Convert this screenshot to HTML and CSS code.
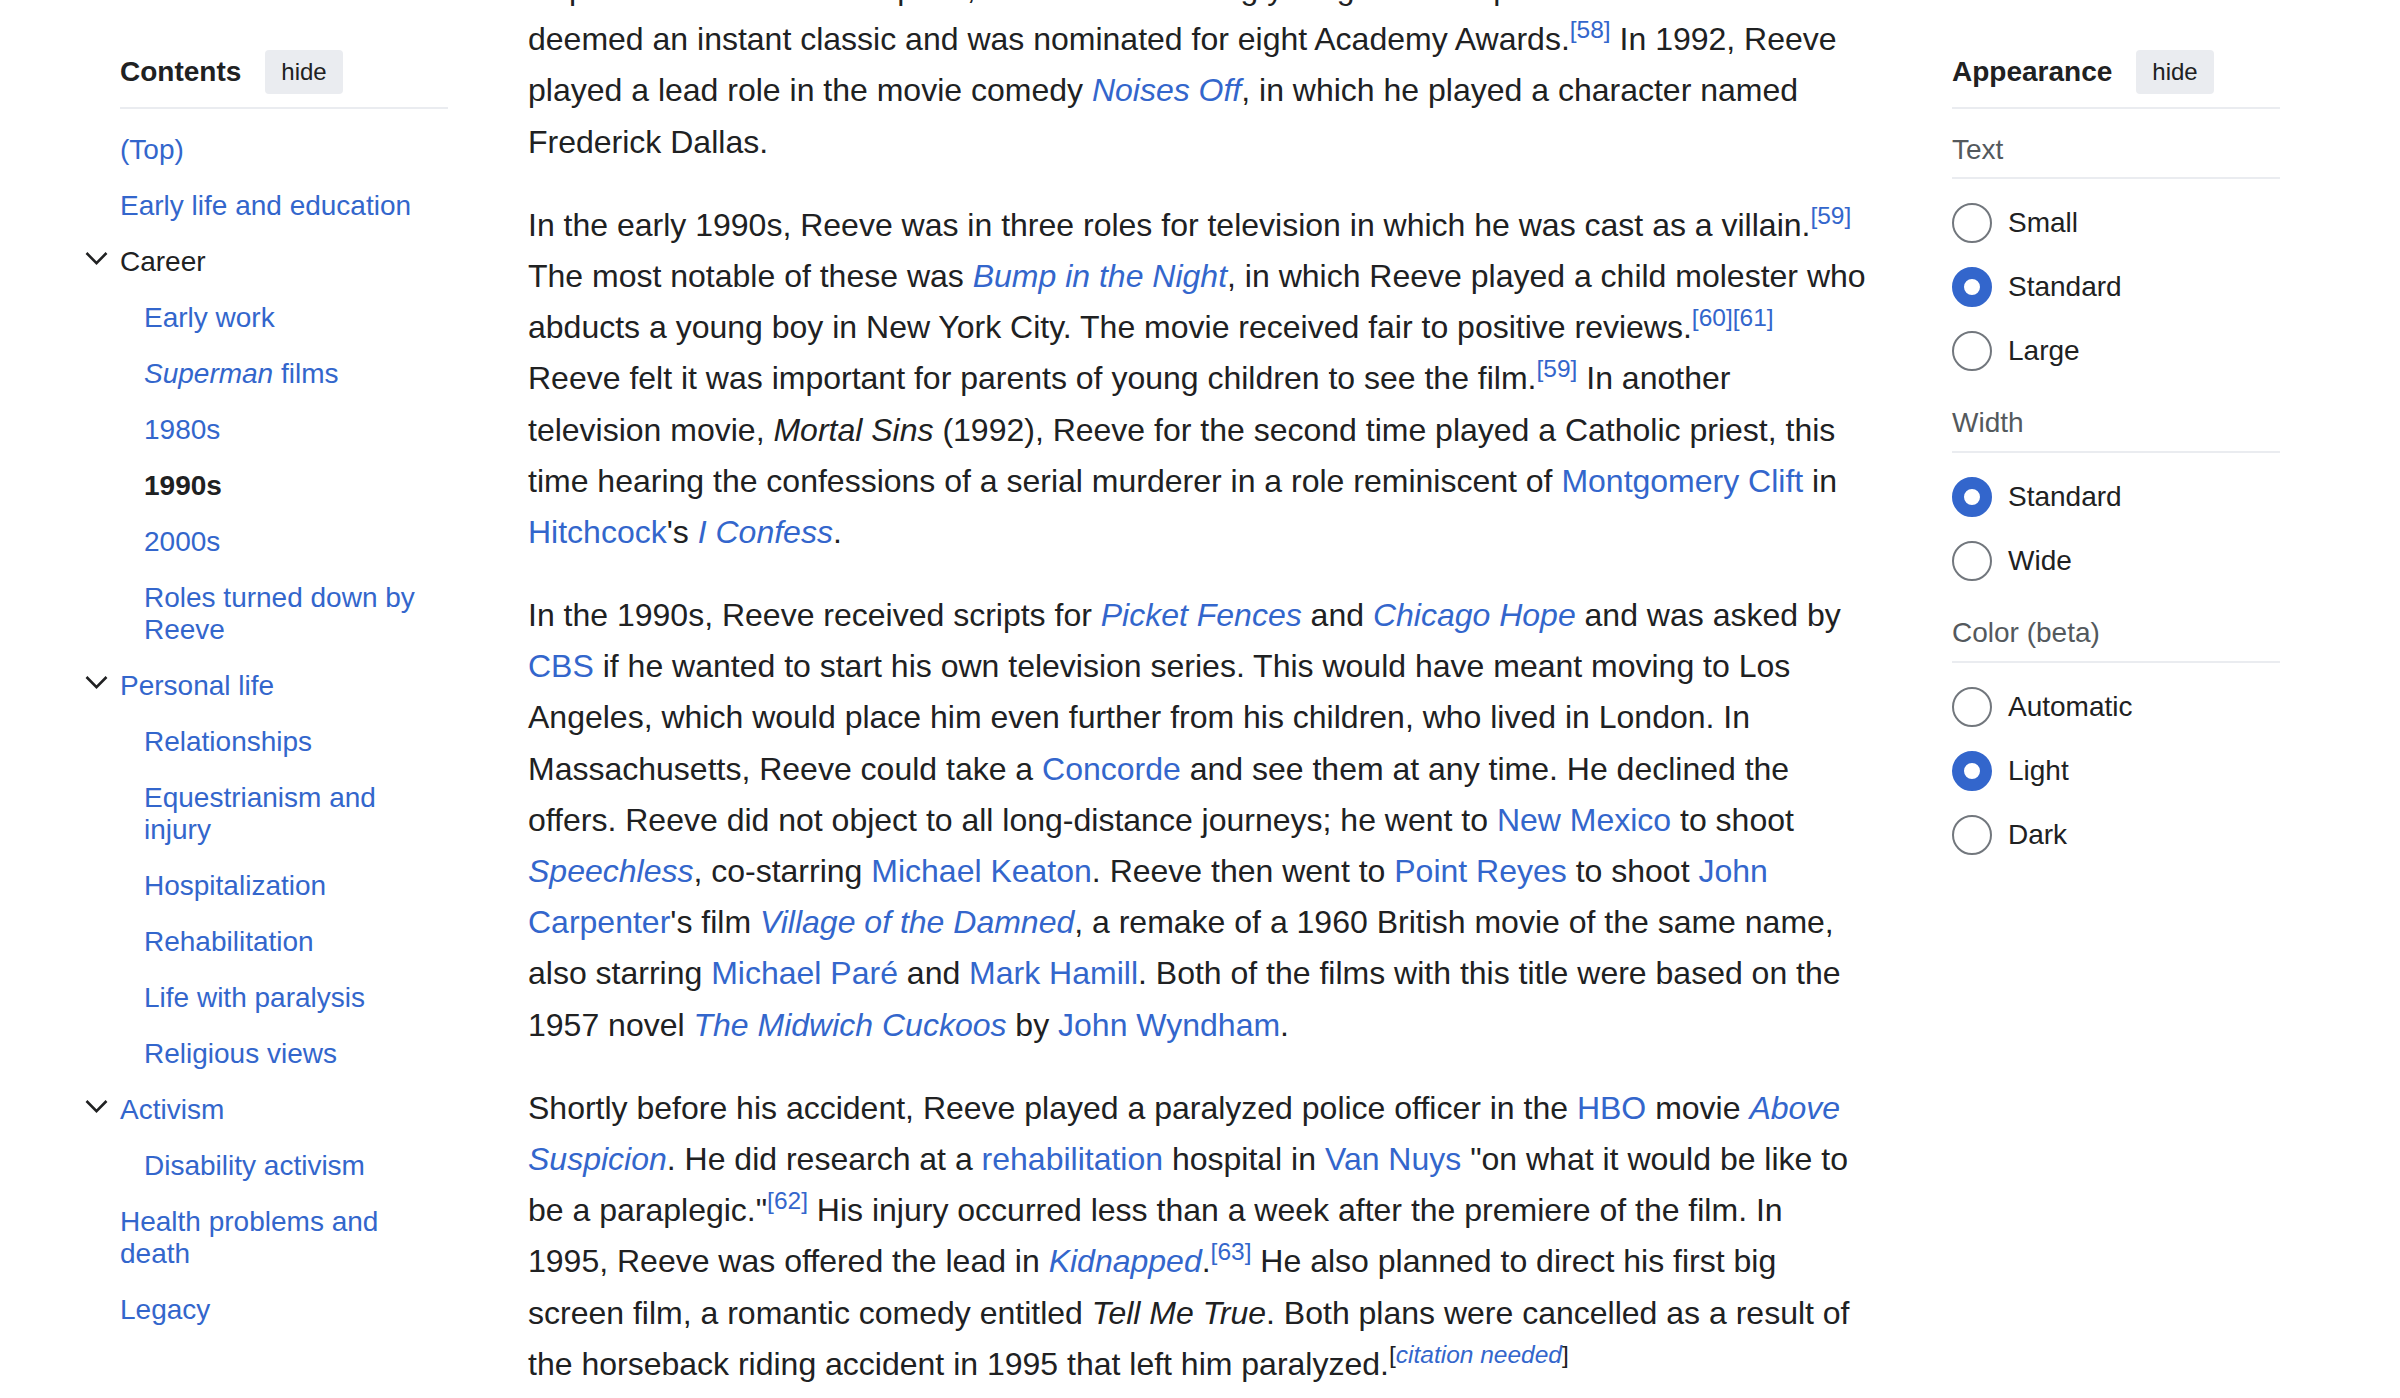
FILE: index.html
```html
<!DOCTYPE html>
<html lang="en">
<head>
<meta charset="utf-8">
<title>Christopher Reeve – 1990s</title>
<link rel="stylesheet" href="styles.css">
</head>
<body>
<div class="page">
  <nav class="toc">
    <div class="panel-header">
      <h2 class="panel-title">Contents</h2>
      <button class="hide-btn" type="button">hide</button>
    </div>
    <ul class="toc-list">
      <li class="toc-item"><a href="#">(Top)</a></li>
      <li class="toc-item"><a href="#">Early life and education</a></li>
      <li class="toc-item">
        <svg class="chevron" viewBox="0 0 23 15" width="23" height="15"><polyline points="1.5,2 11.5,12.2 21.5,2" fill="none" stroke="#202122" stroke-width="2.6"/></svg>
        <a href="#" class="current-parent">Career</a>
        <ul class="toc-sublist">
          <li class="toc-item"><a href="#">Early work</a></li>
          <li class="toc-item"><a href="#"><i>Superman</i> films</a></li>
          <li class="toc-item"><a href="#">1980s</a></li>
          <li class="toc-item"><a href="#" class="current">1990s</a></li>
          <li class="toc-item"><a href="#">2000s</a></li>
          <li class="toc-item"><a href="#">Roles turned down by Reeve</a></li>
        </ul>
      </li>
      <li class="toc-item">
        <svg class="chevron" viewBox="0 0 23 15" width="23" height="15"><polyline points="1.5,2 11.5,12.2 21.5,2" fill="none" stroke="#202122" stroke-width="2.6"/></svg>
        <a href="#">Personal life</a>
        <ul class="toc-sublist">
          <li class="toc-item"><a href="#">Relationships</a></li>
          <li class="toc-item"><a href="#">Equestrianism and injury</a></li>
          <li class="toc-item"><a href="#">Hospitalization</a></li>
          <li class="toc-item"><a href="#">Rehabilitation</a></li>
          <li class="toc-item"><a href="#">Life with paralysis</a></li>
          <li class="toc-item"><a href="#">Religious views</a></li>
        </ul>
      </li>
      <li class="toc-item">
        <svg class="chevron" viewBox="0 0 23 15" width="23" height="15"><polyline points="1.5,2 11.5,12.2 21.5,2" fill="none" stroke="#202122" stroke-width="2.6"/></svg>
        <a href="#">Activism</a>
        <ul class="toc-sublist">
          <li class="toc-item"><a href="#">Disability activism</a></li>
        </ul>
      </li>
      <li class="toc-item"><a href="#">Health problems and death</a></li>
      <li class="toc-item"><a href="#">Legacy</a></li>
    </ul>
  </nav>

  <main class="content">
    <p>Hopkins and Emma Thompson, with Reeve starring yet again in the part of a<br>deemed an instant classic and was nominated for eight Academy Awards.<sup class="ref"><a href="#">[58]</a></sup> In 1992, Reeve<br>played a lead role in the movie comedy <a href="#"><i>Noises Off</i></a>, in which he played a character named<br>Frederick Dallas.</p>

    <p>In the early 1990s, Reeve was in three roles for television in which he was cast as a villain.<sup class="ref"><a href="#">[59]</a></sup><br>The most notable of these was <a href="#"><i>Bump in the Night</i></a>, in which Reeve played a child molester who<br>abducts a young boy in New York City. The movie received fair to positive reviews.<sup class="ref"><a href="#">[60]</a><a href="#">[61]</a></sup><br>Reeve felt it was important for parents of young children to see the film.<sup class="ref"><a href="#">[59]</a></sup> In another<br>television movie, <i>Mortal Sins</i> (1992), Reeve for the second time played a Catholic priest, this<br>time hearing the confessions of a serial murderer in a role reminiscent of <a href="#">Montgomery Clift</a> in<br><a href="#">Hitchcock</a>'s <a href="#"><i>I Confess</i></a>.</p>

    <p>In the 1990s, Reeve received scripts for <a href="#"><i>Picket Fences</i></a> and <a href="#"><i>Chicago Hope</i></a> and was asked by<br><a href="#">CBS</a> if he wanted to start his own television series. This would have meant moving to Los<br>Angeles, which would place him even further from his children, who lived in London. In<br>Massachusetts, Reeve could take a <a href="#">Concorde</a> and see them at any time. He declined the<br>offers. Reeve did not object to all long-distance journeys; he went to <a href="#">New Mexico</a> to shoot<br><a href="#"><i>Speechless</i></a>, co-starring <a href="#">Michael Keaton</a>. Reeve then went to <a href="#">Point Reyes</a> to shoot <a href="#">John<br>Carpenter</a>'s film <a href="#"><i>Village of the Damned</i></a>, a remake of a 1960 British movie of the same name,<br>also starring <a href="#">Michael Paré</a> and <a href="#">Mark Hamill</a>. Both of the films with this title were based on the<br>1957 novel <a href="#"><i>The Midwich Cuckoos</i></a> by <a href="#">John Wyndham</a>.</p>

    <p>Shortly before his accident, Reeve played a paralyzed police officer in the <a href="#">HBO</a> movie <a href="#"><i>Above<br>Suspicion</i></a>. He did research at a <a href="#">rehabilitation</a> hospital in <a href="#">Van Nuys</a> "on what it would be like to<br>be a paraplegic."<sup class="ref"><a href="#">[62]</a></sup> His injury occurred less than a week after the premiere of the film. In<br>1995, Reeve was offered the lead in <a href="#"><i>Kidnapped</i></a>.<sup class="ref"><a href="#">[63]</a></sup> He also planned to direct his first big<br>screen film, a romantic comedy entitled <i>Tell Me True</i>. Both plans were cancelled as a result of<br>the horseback riding accident in 1995 that left him paralyzed.<sup class="ref">[<a href="#"><i>citation needed</i></a>]</sup></p>
  </main>

  <aside class="appearance">
    <div class="panel-header">
      <h2 class="panel-title">Appearance</h2>
      <button class="hide-btn" type="button">hide</button>
    </div>
    <section class="app-section">
      <div class="app-label">Text</div>
      <div class="radio-list">
        <label class="radio"><input type="radio" name="size"><span>Small</span></label>
        <label class="radio"><input type="radio" name="size" checked><span>Standard</span></label>
        <label class="radio"><input type="radio" name="size"><span>Large</span></label>
      </div>
    </section>
    <section class="app-section">
      <div class="app-label">Width</div>
      <div class="radio-list">
        <label class="radio"><input type="radio" name="width" checked><span>Standard</span></label>
        <label class="radio"><input type="radio" name="width"><span>Wide</span></label>
      </div>
    </section>
    <section class="app-section">
      <div class="app-label">Color (beta)</div>
      <div class="radio-list">
        <label class="radio"><input type="radio" name="color"><span>Automatic</span></label>
        <label class="radio"><input type="radio" name="color" checked><span>Light</span></label>
        <label class="radio"><input type="radio" name="color"><span>Dark</span></label>
      </div>
    </section>
  </aside>
</div>
</body>
</html>
```

FILE: styles.css
```css
html, body {
  margin: 0;
  padding: 0;
  height: 100%;
  overflow: hidden;
  background: #ffffff;
}

body {
  font-family: "Liberation Sans", Arial, Helvetica, sans-serif;
  color: #202122;
}

a {
  color: #3366cc;
  text-decoration: none;
}

.page {
  display: flex;
  align-items: flex-start;
  padding: 0 120px;
}

/* ---------- side panels ---------- */
.toc,
.appearance {
  width: 328px;
  flex: none;
  padding-top: 50px;
  font-size: 28px;
}

.appearance {
  margin-left: auto;
}

.panel-header {
  display: flex;
  align-items: center;
  gap: 24px;
  padding-bottom: 13px;
  border-bottom: 2px solid #eaecf0;
}

.panel-title {
  margin: 0;
  font-size: 28px;
  font-weight: bold;
  line-height: 32.4px;
  color: #202122;
}

.hide-btn {
  height: 44px;
  padding: 0 16px;
  border: 0;
  border-radius: 4px;
  background: #eaecf0;
  color: #202122;
  font-family: "Liberation Sans", Arial, Helvetica, sans-serif;
  font-size: 24px;
  line-height: 44px;
}

/* ---------- table of contents ---------- */
.toc-list,
.toc-sublist {
  list-style: none;
  margin: 0;
  padding: 0;
}

.toc-list {
  margin-top: 13px;
}

.toc-sublist {
  padding-left: 24px;
}

.toc-item {
  position: relative;
}

.toc-item > a {
  display: block;
  padding: 12px 0;
  line-height: 32px;
}

.toc-item > a.current-parent {
  color: #202122;
}

.toc-item > a.current {
  color: #202122;
  font-weight: bold;
}

.chevron {
  position: absolute;
  left: -35px;
  top: 17px;
  display: block;
}

/* ---------- article text ---------- */
.content {
  width: 1352px;
  flex: none;
  margin-left: 80px;
  margin-top: -37px;
  font-size: 32px;
  line-height: 1.6;
}

.content p {
  margin: 0 0 32px;
}

.ref {
  font-size: 24.5px;
  line-height: 1;
  vertical-align: super;
  font-style: normal;
}

/* ---------- appearance panel ---------- */
.app-section {
  margin-top: 24.5px;
}

.app-label {
  color: #54595d;
  line-height: 32.4px;
  padding-bottom: 11px;
  border-bottom: 2px solid #eaecf0;
}

.radio-list {
  margin-top: 12px;
}

.radio {
  display: flex;
  align-items: center;
  gap: 16px;
  height: 64px;
  line-height: 32.4px;
  color: #202122;
}

.radio input {
  appearance: none;
  -webkit-appearance: none;
  box-sizing: border-box;
  width: 40px;
  height: 40px;
  margin: 0;
  border: 2px solid #72777d;
  border-radius: 50%;
  background: #ffffff;
  flex: none;
}

.radio input:checked {
  border: 12px solid #3366cc;
}
```
